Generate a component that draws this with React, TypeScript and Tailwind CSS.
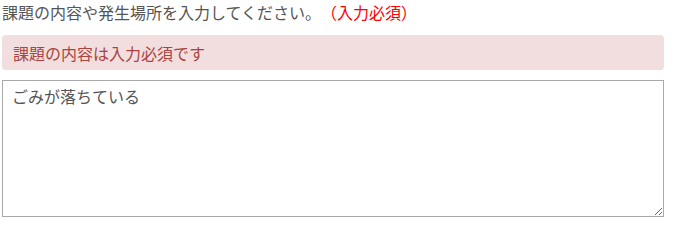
import React from "react";

export default function App() {
  return (
    <div
      className="pl-[2px] pt-0 w-[697px] h-[230px] bg-white [text-spacing-trim:space-all]"
      style={{ fontFamily: '"Noto Sans CJK JP", "Noto Sans", sans-serif' }}
    >
      <div className="text-[16px] leading-[24px] text-[#555555] [text-spacing-trim:space-all]">
        課題の内容や発生場所を入力してください。
        <span className="text-[#ff0000]">（入力必須）</span>
      </div>
      <div className="mt-[11px] w-[662px] h-[35px] flex items-center px-[11px] rounded-[4px] bg-[#f2dede] text-[#a94442] text-[16px]">
        課題の内容は入力必須です
      </div>
      <textarea
        className="block mt-[10px] w-[662px] h-[137px] border border-[#a9a9a9] bg-white pl-[9px] pt-[3px] text-[16px] leading-[24px] text-[#555555] outline-none"
        defaultValue="ごみが落ちている"
      />
    </div>
  );
}
